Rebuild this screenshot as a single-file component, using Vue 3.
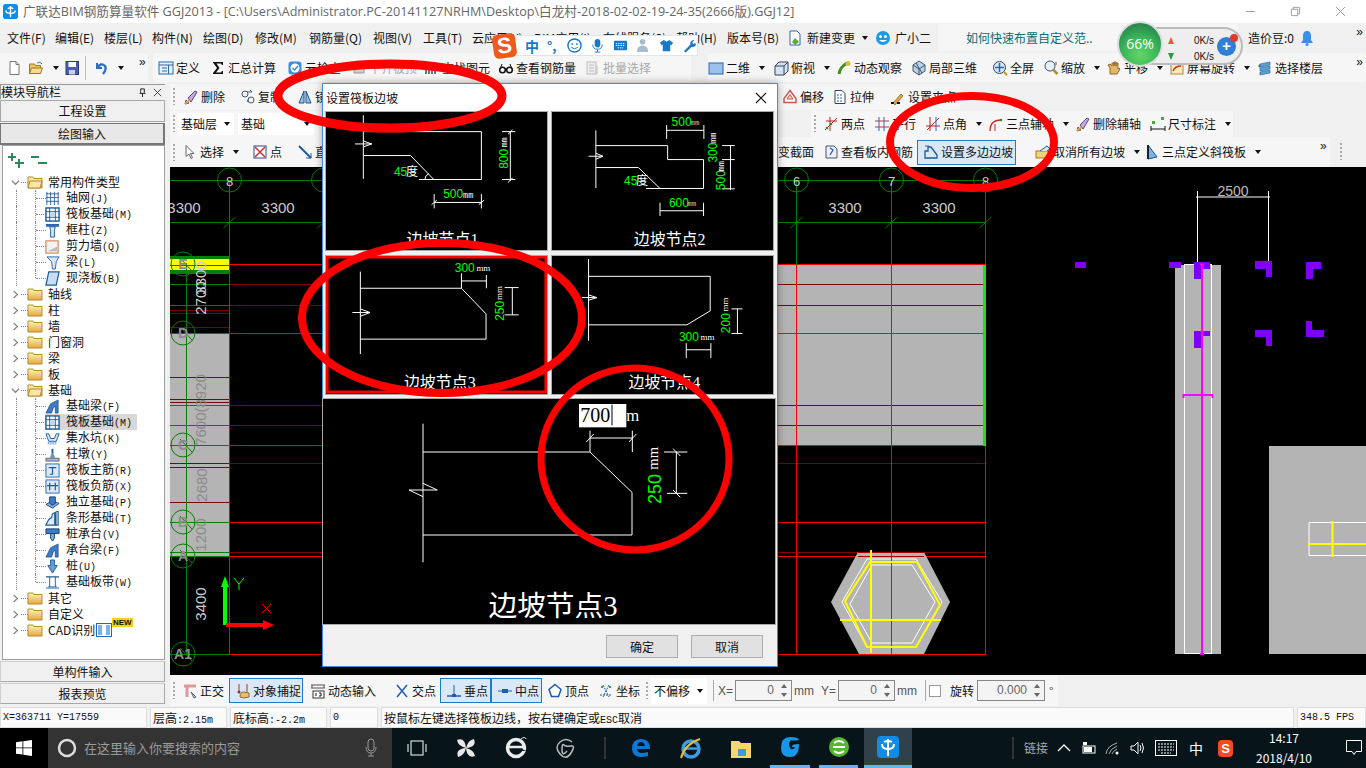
<script setup>
const ic = {
  doc: '<path d="M4 1.5h6l3 3v10H4z" fill="#fff" stroke="#777"/><path d="M10 1.5v3h3" fill="#ddd" stroke="#777"/>',
  open: '<path d="M1.5 4h5l1 1.5h5v8h-11z" fill="#e9c46a" stroke="#a07818"/><path d="M3.5 8h11l-2 5.5h-11z" fill="#f7dc8f" stroke="#a07818"/><path d="M9 3q3-2 5 1" fill="none" stroke="#2a6fc9"/>',
  save: '<rect x="2" y="1.5" width="12.5" height="13" fill="#4a5fb0" stroke="#2c3a80"/><rect x="4.5" y="2" width="7.5" height="5" fill="#fff"/><rect x="5" y="10" width="6" height="4.5" fill="#c9cfe6"/>',
  undo: '<path d="M4 3v5h5" fill="none" stroke="#2b6fc2" stroke-width="2"/><path d="M4 8q4-6 8-2q2 3-2 8" fill="none" stroke="#2b6fc2" stroke-width="2.4"/>',
  define: '<rect x="1" y="2" width="14" height="12" fill="#e6effa" stroke="#2d6ba8"/><path d="M1 5h14M4 8h5M4 11h5M10.500 5v9" stroke="#2d6ba8"/>',
  sigma: '<path d="M3 2h10v3h-1l-1-1.500H6.500L9.500 8l-3.500 4.500H11l1-1.500h1v3H3v-1l4-5-4-5.500z" fill="#111"/>',
  check: '<rect x="1.500" y="1.500" width="13" height="13" rx="3" fill="#3a8fd9"/><circle cx="8" cy="8" r="4.500" fill="#fff"/><path d="M5.500 8l2 2 3.500-4" fill="none" stroke="#3a8fd9" stroke-width="1.500"/>',
  plate: '<path d="M3 13V6h4V3h6v10z" fill="#ccc" stroke="#999"/>',
  find: '<path d="M2 14V3h3v11M8 14V3h3v11M2 7h9" fill="none" stroke="#345" stroke-width="1.500"/>',
  glasses: '<circle cx="4.500" cy="10" r="2.800" fill="none" stroke="#111" stroke-width="1.500"/><circle cx="11.500" cy="10" r="2.800" fill="none" stroke="#111" stroke-width="1.500"/><path d="M7 9h2M2 9l2-5M14 9l-2-5" stroke="#111"/>',
  batch: '<rect x="2" y="2" width="9" height="12" fill="#eee" stroke="#bbb"/><path d="M4 5h5M4 8h5M4 11h5M12 6v8" stroke="#bbb"/>',
  sq2d: '<rect x="1" y="3" width="14" height="11" fill="#9cc0ea" stroke="#2a64b0"/>',
  cube: '<path d="M2 6l4-4h9v9l-4 4H2z" fill="#d4e3f5" stroke="#345"/><path d="M2 6h9v9M11 6l4-4" fill="none" stroke="#345"/>',
  orbit: '<path d="M3 14q1-7 8-11" fill="none" stroke="#4a8a1f" stroke-width="3"/><circle cx="12" cy="3.500" r="2.500" fill="#d5c22c"/>',
  local3d: '<path d="M8 1l6 4v6l-6 4-6-4V5z" fill="#b9d2ee" stroke="#456"/><path d="M2 5l6 4 6-4M8 9v6M5 3l6 10" fill="none" stroke="#456"/>',
  full: '<circle cx="7.500" cy="7.500" r="6" fill="#d9e6f5" stroke="#345"/><path d="M7.500 3v9M3 7.500h9" stroke="#2a64b0" stroke-width="1.500"/><path d="M12 12l3 3" stroke="#c90" stroke-width="2"/>',
  zoom: '<circle cx="7" cy="6" r="5" fill="#e8f0f8" stroke="#456"/><path d="M10.500 10l4 4" stroke="#b98b1e" stroke-width="2.500"/><path d="M13 2v3" stroke="#555"/>',
  pan: '<path d="M4 14V8l-2-3 2-1 2 2V3h2v3V2h2v4V3h2v6l1-1 1 1-3 5z" fill="#e2b66b" stroke="#8a6a2a"/>',
  rotate: '<rect x="2" y="3" width="12" height="11" fill="#fbe9b6" stroke="#b08a2a"/><path d="M4 11q2-5 8-5" fill="none" stroke="#c33" stroke-width="1.500"/><path d="M2 3h12" stroke="#2a64b0" stroke-width="2"/>',
  floors: '<path d="M3 4l10-2v3L3 7zM3 8l10-2v3L3 11zM3 12l10-2v3l-10 2z" fill="#5ea0d8" stroke="#1d5c96" stroke-width=".6"/><path d="M1 6l2-2v4z" fill="#2a8a2a"/>',
  brush: '<path d="M3 11l3 3-4 1zM5 9l3 4 6-10-2-1z" fill="#c8a8e0" stroke="#5a4a80"/><path d="M2 14q3 0 4-3" stroke="#d8a22c" fill="none" stroke-width="2"/>',
  copy: '<circle cx="5" cy="5" r="3" fill="none" stroke="#456"/><circle cx="11" cy="11" r="3" fill="none" stroke="#456"/><path d="M7 3h5l-2-2M7 13L9 9" stroke="#2a64b0" fill="none"/>',
  mirror: '<path d="M7 2v12H2zM9 2v12h5z" fill="#9cc0ea" stroke="#1d4f8a"/>',
  offset: '<path d="M8 1.500l6 8v4H2v-4z" fill="#fff" stroke="#c55" stroke-width="1.500"/><path d="M8 5.500l3 4.500H5z" fill="#f6cccc" stroke="#c55"/>',
  stretch: '<path d="M3 1.500h7l3 3v10H3z" fill="#fff" stroke="#345"/><path d="M5 6h5M5 9h5M5 12h5" stroke="#2a64b0" stroke-dasharray="2 1"/>',
  grip: '<path d="M3 14l8-9 2 2-8 9z" fill="#d8a54a" stroke="#704d10" stroke-width=".6"/><rect x="1" y="13" width="3" height="2" fill="#111"/><rect x="7" y="13" width="3" height="2" fill="#111"/>',
  twop: '<path d="M2 14L14 2M3 5h11M7 1v14" stroke="#b22" fill="none"/><circle cx="8" cy="8" r="1.300" fill="#2a8a2a"/><circle cx="4" cy="12" r="1.300" fill="#2a8a2a"/>',
  para: '<path d="M1 5h14M1 11h14" stroke="#c33"/><path d="M5 1v14M10 1v14" stroke="#36c"/>',
  angle: '<path d="M2 14L14 2M5 1v14M1 10h14" stroke="#b22" fill="none"/><path d="M11 1v14" stroke="#36c"/>',
  arc3: '<path d="M2 15q0-11 11-11" fill="none" stroke="#c22" stroke-width="1.300"/><circle cx="13" cy="4" r="1.300" fill="#2a8a2a"/><path d="M7 8v7" stroke="#c22"/>',
  dim: '<path d="M1 13h14M1 10v5M15 10v5" stroke="#111"/><rect x="2" y="5" width="3" height="3" fill="#4a4"/><rect x="11" y="1" width="3" height="3" fill="#4a4"/>',
  cursor: '<path d="M4 1.500v11l3-2.500 2 4.500 1.500-.7-2-4.300H12z" fill="#fff" stroke="#667"/>',
  point: '<rect x="2" y="2" width="12" height="12" fill="#fff" stroke="#2a4a8a"/><path d="M3 3l10 10M13 3L3 13" stroke="#c33" stroke-width="1.500"/>',
  line: '<path d="M2 2l12 12" stroke="#1d5c96" stroke-width="2"/><path d="M14 9v5H9" fill="none" stroke="#1d5c96"/>',
  section: '<path d="M4 2h8v12H4z" fill="#fff" stroke="#456"/><path d="M5 5h6M5 9h6" stroke="#2a64b0"/>',
  rebar: '<path d="M3 2h8l3 3v9H3z" fill="#eef" stroke="#456"/><path d="M7 4l3 2-3 5" fill="none" stroke="#2a64b0" stroke-width="1.300"/>',
  slope: '<path d="M2 14h12v-3L8 3H5v4H2z" fill="none" stroke="#1d5c96" stroke-width="1.300"/><path d="M2 2l4 0" stroke="#1d5c96"/><path d="M8 3l6 8" stroke="#1d5c96" stroke-dasharray="2 1"/>',
  cancel: '<rect x="1" y="7" width="14" height="7" fill="#f4d27a" stroke="#a07818"/><path d="M5 7l7-5 3 3-3 2" fill="#dbe6f5" stroke="#1d5c96"/>',
  tri: '<path d="M4 1v14l9-2z" fill="#7fb0e6" stroke="#1d4f8a"/><path d="M4 1v14" stroke="#123" stroke-width="2"/>',
  ortho: '<path d="M2 3h12M5 3v11" stroke="#d99" stroke-width="3"/><path d="M9 9l5 5-2 1z" fill="#bcd" stroke="#567"/>',
  snap: '<path d="M4 1v8M12 1v8" stroke="#a33"/><circle cx="4" cy="9" r="1.500" fill="#833"/><path d="M5 14q0-5 4-5l5 1v4l-5 1z" fill="#e4c06e" stroke="#8a6a2a"/>',
  dyn: '<path d="M1 2h14M1 5h14M2 2v3M14 2v3" stroke="#555"/><rect x="3" y="8" width="11" height="7" fill="#fff" stroke="#333"/><path d="M6 10v3M9 10h2v3h-2" stroke="#111" fill="none"/>',
  cross: '<path d="M3 2l10 12M13 2L3 14" stroke="#1d5cb0" stroke-width="1.500"/>',
  perp: '<path d="M1 13h14" stroke="#1d5cb0" stroke-width="1.500"/><path d="M8 2v12" stroke="#1d5cb0"/><rect x="6" y="11" width="4" height="3" fill="#1d5cb0"/>',
  mid: '<path d="M1 8h14" stroke="#1d5cb0"/><rect x="5" y="6" width="6" height="4" fill="#1d5cb0"/>',
  vert: '<path d="M8 1.500l6 5-2.500 7h-7l-2.500-7z" fill="#fff" stroke="#1d5cb0" stroke-width="1.500"/>',
  coord: '<path d="M2 12h12M5 2l6 12M11 2L5 14" stroke="#1d5cb0" stroke-dasharray="2 1"/><rect x="3" y="3" width="2" height="2" fill="#3a3"/><rect x="11" y="3" width="2" height="2" fill="#3a3"/>'
};
const tree = {
  grid: '<path d="M2 1v14M6 1v14M10 1v14M14 1v14M1 3h14M1 7h14M1 11h14" stroke="#2a66b5" fill="none"/>',
  raft: '<rect x="1" y="1" width="14" height="14" fill="#fff" stroke="#1d5c96" stroke-width="1.500"/><path d="M5 1v14M11 1v14M1 5h14M1 11h14" stroke="#1d5c96"/><rect x="6" y="6" width="4" height="4" fill="#bcd7f2"/>',
  col: '<path d="M1 1h14v3H1z" fill="#2a66b5"/><path d="M5 4h6l-1 4v7H6V8z" fill="#d7e6f7" stroke="#1d5c96"/>',
  wall: '<rect x="1" y="2" width="13" height="13" fill="#f3f3f3" stroke="#d06a2a"/><path d="M3 13l10-5v5z" fill="#bbb"/>',
  beam: '<path d="M2 2h13l-3 5-1 8H8L7 7z" fill="#d7e6f7" stroke="#2a66b5"/>',
  slab: '<path d="M4 1h11l-3 14H1z" fill="#c8def6" stroke="#1d5c96" stroke-width="1.300"/>',
  fbeam: '<path d="M1 15L6 5l8-4v14h-3V8l-2 1-2 6z" fill="#3f7cc7" stroke="#123f73" stroke-width=".7"/>',
  pit: '<path d="M1 3h3l2 5h4l2-5h3l-3 8H4z" fill="#d7e6f7" stroke="#1d5c96"/><path d="M3 13h10" stroke="#5a98dc" stroke-dasharray="1 1" stroke-width="3"/>',
  ped: '<rect x="1" y="12" width="14" height="3" fill="#a9b8ca" stroke="#667"/><path d="M5 12l2-5h2l2 5z" fill="#6e93c2"/><path d="M7 2h2v5H7z" fill="#1d5c96"/>',
  rmain: '<rect x="1" y="1" width="14" height="14" fill="#dbe9f8" stroke="#2a66b5"/><path d="M4 5h8M8 5v7H5" stroke="#1d5c96" fill="none" stroke-width="1.300"/>',
  rneg: '<rect x="1" y="1" width="14" height="14" fill="#dbe9f8" stroke="#2a66b5"/><path d="M2 7h12M5 4v8M11 4v8" stroke="#1d5c96" stroke-width="1.300"/>',
  iso: '<path d="M1 10l7-4 7 3-7 5z" fill="#8ab0dc" stroke="#1d4f8a"/><path d="M5 9V2h6v7l-3 2z" fill="#3f7cc7" stroke="#123f73"/>',
  strip: '<path d="M1 15l3-6 3-2 1-4 6-3v15z" fill="#dfeafa" stroke="#1d5c96" stroke-width="1.200"/><path d="M11 2v13" stroke="#1d5c96" stroke-width="2.500"/>',
  cap: '<path d="M1 2h14v5H1z" fill="#3f7cc7" stroke="#123f73"/><path d="M6 7h4v5l-2 3-2-3z" fill="#8ab0dc" stroke="#123f73"/>',
  pile: '<path d="M6 1h4v6h3l-5 8-5-8h3z" fill="#6e9cd4" stroke="#1d5c96"/>',
  band: '<path d="M1 2h14M3 13h10" stroke="#1d5c96" stroke-width="1.500"/><path d="M5 2v11M11 2v11" stroke="#1d5c96"/><rect x="1" y="13" width="14" height="2" fill="#8ab0dc"/>'
};
const rows = [
  { t: '常用构件类型', open: 1 },
  { t: '轴网', k: '(J)', i: 'grid', c: 1 }, { t: '筏板基础', k: '(M)', i: 'raft', c: 1 }, { t: '框柱', k: '(Z)', i: 'col', c: 1 },
  { t: '剪力墙', k: '(Q)', i: 'wall', c: 1 }, { t: '梁', k: '(L)', i: 'beam', c: 1 }, { t: '现浇板', k: '(B)', i: 'slab', c: 1, last: 1 },
  { t: '轴线' }, { t: '柱' }, { t: '墙' }, { t: '门窗洞' }, { t: '梁' }, { t: '板' },
  { t: '基础', open: 1 },
  { t: '基础梁', k: '(F)', i: 'fbeam', c: 1 }, { t: '筏板基础', k: '(M)', i: 'raft', c: 1, sel: 1 }, { t: '集水坑', k: '(K)', i: 'pit', c: 1 },
  { t: '柱墩', k: '(Y)', i: 'ped', c: 1 }, { t: '筏板主筋', k: '(R)', i: 'rmain', c: 1 }, { t: '筏板负筋', k: '(X)', i: 'rneg', c: 1 },
  { t: '独立基础', k: '(P)', i: 'iso', c: 1 }, { t: '条形基础', k: '(T)', i: 'strip', c: 1 }, { t: '桩承台', k: '(V)', i: 'cap', c: 1 },
  { t: '承台梁', k: '(F)', i: 'fbeam', c: 1 }, { t: '桩', k: '(U)', i: 'pile', c: 1 }, { t: '基础板带', k: '(W)', i: 'band', c: 1, last: 1 },
  { t: '其它' }, { t: '自定义' }, { t: 'CAD识别', cad: 1 }
];
const seq = (items, end) => items.map((it, i) => {
  const o = it.o ?? 18, left = it.x - o;
  const next = items[i + 1];
  const nl = next ? next.x - (next.o ?? 18) : end;
  const w = it.w || nl - left;
  return { ...it, o, style: { width: w + 'px', marginRight: nl - left - w + 'px', paddingLeft: o - 18 + 'px' } };
});
const main1 = seq([
  { x: 24, i: 'doc' }, { x: 46, i: 'open', d: 1 }, { x: 82, i: 'save' }, { x: 88, sep: 1, o: 3 }, { x: 111, i: 'undo', d: 1 }
], 148);
const main2 = seq([
  { x: 176, i: 'define', t: '定义' }, { x: 228, i: 'sigma', t: '汇总计算' }, { x: 305, i: 'check', t: '云检查' },
  { x: 369, i: 'plate', t: '平齐板顶', dim: 1 }, { x: 442, i: 'find', t: '查找图元' }, { x: 516, i: 'glasses', t: '查看钢筋量' }, { x: 603, i: 'batch', t: '批量选择', dim: 1 }
], 690);
const main3 = seq([
  { x: 726, i: 'sq2d', t: '二维', d: 1 }, { x: 791, i: 'cube', t: '俯视', d: 1 }, { x: 854, i: 'orbit', t: '动态观察' }, { x: 929, i: 'local3d', t: '局部三维' },
  { x: 1010, i: 'full', t: '全屏' }, { x: 1061, i: 'zoom', t: '缩放', d: 1 }, { x: 1124, i: 'pan', t: '平移', d: 1 }, { x: 1187, i: 'rotate', t: '屏幕旋转', d: 1 }, { x: 1275, i: 'floors', t: '选择楼层' }
], 1350);
const r2a = seq([
  { x: 201, i: 'brush', t: '删除' }, { x: 258, i: 'copy', t: '复制' }, { x: 315, i: 'mirror', t: '镜向' }, { x: 375, i: 'offset', t: '延伸' }
], 782);
const r2b = seq([
  { x: 800, i: 'offset', t: '偏移' }, { x: 850, i: 'stretch', t: '拉伸' }, { x: 908, i: 'grip', t: '设置夹点' }
], 960);
const r3 = seq([
  { x: 841, i: 'twop', t: '两点' }, { x: 892, i: 'para', t: '平行' }, { x: 943, i: 'angle', t: '点角', d: 1 }, { x: 1006, i: 'arc3', t: '三点辅轴', d: 1 },
  { x: 1093, i: 'brush', t: '删除辅轴' }, { x: 1168, i: 'dim', t: '尺寸标注', d: 1 }
], 1233);
const r4a = seq([
  { x: 200, i: 'cursor', t: '选择', d: 1 }, { x: 270, i: 'point', t: '点' }, { x: 315, i: 'line', t: '直线' }
], 778);
const r4b = seq([
  { x: 778, t: '变截面', o: 0, noicon: 1 }, { x: 841, i: 'rebar', t: '查看板内钢筋' }, { x: 940, i: 'slope', t: '设置多边边坡', o: 23, w: 99, active: 1 },
  { x: 1053, i: 'cancel', t: '取消所有边坡', d: 1 }, { x: 1162, i: 'tri', t: '三点定义斜筏板', d: 1 }
], 1315);
const bt = seq([
  { x: 200, i: 'ortho', t: '正交' }, { x: 252, i: 'snap', t: '对象捕捉', o: 23, w: 74, active: 1 }, { x: 328, i: 'dyn', t: '动态输入' },
  { x: 412, i: 'cross', t: '交点' }, { x: 463, i: 'perp', t: '垂点', o: 23, w: 51, active: 1 }, { x: 514, i: 'mid', t: '中点', o: 23, w: 51, active: 1 },
  { x: 565, i: 'vert', t: '顶点' }, { x: 616, i: 'coord', t: '坐标' }
], 646);
const menus = [['文件(F)', 7], ['编辑(E)', 55], ['楼层(L)', 104], ['构件(N)', 152], ['绘图(D)', 203], ['修改(M)', 255], ['钢筋量(Q)', 309], ['视图(V)', 373], ['工具(T)', 423], ['云应用(Y)', 472], ['BIM应用(I)', 534], ['在线服务(S)', 603], ['帮助(H)', 676], ['版本号(B)', 727]]
  .map((m, i, a) => ({ t: m[0], w: (a[i + 1] ? a[i + 1][1] : 787) - m[1] }));
const redR = [264.5, 333.5, 445.5, 522.5, 556.5, 654.5];
const darkR = [284.5, 305.5, 405.5, 425.5, 463.5, 552.5];
const darkL = [310.5, 313.5, 327.5, 377.5, 399.5, 402.5, 463.5, 467.5, 502.5];
const greenL = [284.5, 305.5, 333.5, 405.5, 425.5, 445.5, 522.5, 552.5, 556.5, 654.5];
const topAxes = [[229.5, '8'], [323.5, ''], [796.5, '6'], [891.5, '7'], [985.5, '8']];
const leftAxes = [[264, 'E'], [333, 'D'], [445, 'C'], [522, 'B'], [556, 'A'], [654, 'A1']];
const purple = 'M1075 262h11v6h-11zM1169 262h12v6h-12zM1194 262h16v7h-9v10h-7zM1255 261h17v16h-6v-8h-11zM1306 262h15v7h-8v10h-7zM1194 331h16v5h-9v12h-7zM1255 330h17v16h-6v-9h-11zM1306 321h6v9h12v7h-18z';
</script>

<template>
  <div class="app">
    <svg class="defs" width="0" height="0">
      <defs>
        <linearGradient id="fold" x1="0" y1="0" x2="0" y2="1"><stop offset="0" stop-color="#fff3c4"/><stop offset="1" stop-color="#e2a93a"/></linearGradient>
      </defs>
    </svg>

    <header class="titlebar">
      <svg class="logo" viewBox="0 0 16 16"><rect width="16" height="16" rx="3" fill="#0f8de6"/><path d="M8 2v12M3 7q0 3 5 3t5-3M5 5q3-2 6 0" fill="none" stroke="#fff" stroke-width="1.500"/></svg>
      <span class="title-text">广联达BIM钢筋算量软件 GGJ2013 - [C:\Users\Administrator.PC-20141127NRHM\Desktop\白龙村-2018-02-02-19-24-35(2666版).GGJ12]</span>
      <div class="winbtns">
        <svg viewBox="0 0 12 12"><path d="M1 6h10" stroke="#999"/></svg>
        <svg viewBox="0 0 12 12"><path d="M1.500 3.500h7v7h-7zM3.500 3.500v-2h7v7h-2" fill="none" stroke="#999"/></svg>
        <svg viewBox="0 0 12 12"><path d="M1 1l10 10M11 1L1 11" stroke="#999"/></svg>
      </div>
    </header>

    <nav class="menubar">
      <span v-for="m in menus" :key="m.t" class="menu" :style="{ width: m.w + 'px' }">{{ m.t }}</span>
      <svg class="ic16 mi" viewBox="0 0 16 16"><path d="M3 1h7l3 3v11H3z" fill="#fff" stroke="#2a66b5"/><path d="M8 8l4 4-4 3-3-3z" fill="#5cac2c"/></svg>
      <span class="menu nv">新建变更</span><i class="drop mdrop"></i>
      <svg class="ic16 mi2" viewBox="0 0 16 16"><circle cx="8" cy="8" r="7" fill="#1e9be8"/><circle cx="5.500" cy="6.500" r="1.500" fill="#fff"/><circle cx="10.500" cy="6.500" r="1.500" fill="#fff"/><path d="M4 10q4 4 8 0" fill="#fff"/></svg>
      <span class="menu">广小二</span>
      <span class="news">如何快速布置自定义范..</span>
      <span class="beans">造价豆:0</span>
      <svg class="ic16 bell" viewBox="0 0 16 16"><path d="M8 1q4 0 4 5v4l2 3H2l2-3V6q0-5 4-5z" fill="#3a8fe8"/><circle cx="8" cy="14.500" r="1.500" fill="#3a8fe8"/></svg>
      <span class="more">»</span>
    </nav>

    <div class="toolrow">
      <div class="tb tb1">
        <template v-for="(t, n) in main1" :key="n">
          <div class="tool" :style="t.style">
            <b v-if="t.sep" class="sep"></b>
            <svg v-else class="ic16" viewBox="0 0 16 16" v-html="ic[t.i]"></svg>
            <i v-if="t.d" class="drop"></i>
          </div>
        </template>
      </div>
      <span class="more in1">»</span>
      <div class="tb tb2">
        <div v-for="t in main2" :key="t.t" class="tool" :class="{ dim: t.dim }" :style="t.style">
          <svg class="ic16" viewBox="0 0 16 16" v-html="ic[t.i]"></svg><span>{{ t.t }}</span>
        </div>
      </div>
      <div class="tb tb3">
        <div v-for="t in main3" :key="t.t" class="tool" :style="t.style">
          <svg class="ic16" viewBox="0 0 16 16" v-html="ic[t.i]"></svg><span>{{ t.t }}</span><i v-if="t.d" class="drop"></i>
        </div>
        <span class="more in3">»</span>
      </div>
    </div>

    <div class="workspace">
      <aside class="nav">
        <div class="nav-head">
          <span>模块导航栏</span>
          <svg viewBox="0 0 10 10"><path d="M3 1h4v4l1 1H2l1-1zM5 6v4" fill="none" stroke="#111"/></svg>
          <svg viewBox="0 0 10 10"><path d="M1 1l8 8M9 1L1 9" stroke="#333"/></svg>
        </div>
        <button class="navbtn">工程设置</button>
        <button class="navbtn cur">绘图输入</button>
        <div class="treebox">
          <div class="plusminus">
            <svg viewBox="0 0 18 16"><path d="M1 5h8M5 1v8M8 11h9M12 7v9" stroke="#2a8a5a" stroke-width="2"/></svg>
            <svg viewBox="0 0 18 16"><path d="M1 5h8M8 11h9" stroke="#2a8a5a" stroke-width="2"/></svg>
          </div>
          <div class="tree">
            <div v-for="(r, n) in rows" :key="n" class="row" :class="{ child: r.c, last: r.last }">
              <template v-if="r.c">
                <u class="hd"></u>
                <span class="lbl" :class="{ sel: r.sel }"><svg class="ic14" viewBox="0 0 16 16" v-html="tree[r.i]"></svg><span>{{ r.t }}<em>{{ r.k }}</em></span></span>
              </template>
              <template v-else>
                <svg class="chev" viewBox="0 0 10 10"><path :d="r.open ? 'M1 3l4 4 4-4' : 'M3 1l4 4-4 4'" fill="none" stroke="#888" stroke-width="1.500"/></svg>
                <u class="hd0"></u>
                <svg class="ic14 fold" viewBox="0 0 16 14">
                  <path d="M1 2h5l1 1.500h8V13H1z" fill="url(#fold)" stroke="#b98a2a"/>
                  <path v-if="r.open" d="M3 6h12l-2 7H1z" fill="#fbe6a8" stroke="#b98a2a"/>
                </svg>
                <span class="lbl0">{{ r.t }}</span>
                <template v-if="r.cad">
                  <svg class="cadic" viewBox="0 0 16 14"><rect x=".5" y=".5" width="15" height="13" fill="#fff" stroke="#2a66b5"/><path d="M2 2h4v10H2zM10 2h4v10h-4z" fill="#7fb2ea"/></svg>
                  <span class="newtag">NEW</span>
                </template>
              </template>
            </div>
          </div>
        </div>
        <button class="navbtn low">单构件输入</button>
        <button class="navbtn low">报表预览</button>
      </aside>

      <main class="editor">
        <div class="erow e2">
          <div class="tb2a">
            <b class="gripper"></b>
            <div v-for="t in r2a" :key="t.t" class="tool" :style="t.style"><svg class="ic16" viewBox="0 0 16 16" v-html="ic[t.i]"></svg><span>{{ t.t }}</span></div>
            <div v-for="t in r2b" :key="t.t" class="tool" :style="t.style"><svg class="ic16" viewBox="0 0 16 16" v-html="ic[t.i]"></svg><span>{{ t.t }}</span></div>
          </div>
        </div>
        <div class="erow e3">
          <div class="selects">
            <b class="gripper"></b>
            <span class="sel1">基础层<i class="drop"></i></span>
            <span class="sel2">基础<i class="drop"></i></span>
          </div>
          <div class="tb3a">
            <b class="gripper"></b>
            <div v-for="t in r3" :key="t.t" class="tool" :style="t.style"><svg class="ic16" viewBox="0 0 16 16" v-html="ic[t.i]"></svg><span>{{ t.t }}</span><i v-if="t.d" class="drop"></i></div>
          </div>
        </div>
        <div class="erow e4">
          <b class="gripper"></b>
          <div v-for="t in r4a" :key="t.t" class="tool" :style="t.style"><svg class="ic16" viewBox="0 0 16 16" v-html="ic[t.i]"></svg><span>{{ t.t }}</span><i v-if="t.d" class="drop"></i></div>
          <div v-for="t in r4b" :key="t.t" class="tool" :class="{ active: t.active }" :style="t.style"><svg v-if="!t.noicon" class="ic16" viewBox="0 0 16 16" v-html="ic[t.i]"></svg><span>{{ t.t }}</span><i v-if="t.d" class="drop"></i></div>
          <span class="more in4">»</span>
          <b class="gripper g4"></b>
        </div>

        <svg class="cad" viewBox="170 167 1196 508" width="1196" height="508">
          <rect x="170" y="167" width="1196" height="508" fill="#000"/>
          <!-- slab fills -->
          <rect x="170" y="333" width="59" height="223" fill="#b4b4b4"/>
          <rect x="760" y="265" width="223" height="180" fill="#b4b4b4"/>
          <!-- yellow beam -->
          <rect x="170" y="256" width="59" height="18" fill="#008000"/>
          <rect x="170" y="259" width="59" height="11" fill="#ff0"/>
          <path d="M170 265.500H229" stroke="#008000"/>
          <!-- grid lines -->
          <g stroke="#800000" shape-rendering="crispEdges">
            <path v-for="y in darkL" :key="y" :d="`M170 ${y}H229`"/>
            <path v-for="y in darkR" :key="'r' + y" :d="`M229 ${y}H986`"/>
          </g>
          <g stroke="#f00" shape-rendering="crispEdges" fill="none">
            <path v-for="y in redR" :key="y" :d="`M229 ${y}H986`"/>
            <path d="M229.500 264V655M323.500 264V655M796.500 265V655M891.500 265V655M985.500 445V655"/>
          </g>
          <g stroke="#008000" fill="none" shape-rendering="crispEdges">
            <path d="M170 180.500H986M170 222.500H986M229.500 180V264M323.500 180V264M796.500 180V265M891.500 180V265M985.500 180V265M186.500 263V655"/>
            <path v-for="y in greenL" :key="y" :d="`M170 ${y}H229`"/>
          </g>
          <g stroke="#008000" fill="none">
            <circle v-for="a in topAxes" :key="a[0]" :cx="a[0]" cy="180" r="12"/>
            <path v-for="a in topAxes" :key="'t' + a[0]" :d="`M${a[0] - 6} 228L${a[0] + 6} 217`"/>
            <circle v-for="a in leftAxes" :key="a[1]" cx="183" :cy="a[0]" r="12"/>
            <path v-for="a in leftAxes" :key="'l' + a[1]" :d="`M180 ${a[0] - 6}L192 ${a[0] + 7}`"/>
          </g>
          <rect x="983" y="265" width="3" height="181" fill="#1fe01f"/>
          <g class="cadt axis">
            <text v-for="a in topAxes" :key="a[0]" :x="a[0]" y="186">{{ a[1] }}</text>
            <text v-for="a in leftAxes" :key="a[1]" x="183" :y="a[0] + 5" class="ax2">{{ a[1] }}</text>
          </g>
          <g class="cadt">
            <text x="184" y="213">3300</text><text x="278" y="213">3300</text>
            <text x="845" y="213">3300</text><text x="939" y="213">3300</text>
            <text x="1233" y="196" class="dimt">2500</text>
            <text transform="translate(206 298) rotate(-90)">2700</text>
            <text transform="translate(206 278) rotate(-90)">3300</text>
            <text class="ong" transform="translate(206 410) rotate(-90)">7600(8920</text>
            <text class="ong" transform="translate(207 485) rotate(-90)">2680</text>
            <text class="ong" transform="translate(206 535) rotate(-90)">1200</text>
            <text transform="translate(206 604) rotate(-90)">3400</text>
          </g>
          <!-- origin axes -->
          <path d="M223 625V587h-2l4-11 4 11h-2v38z" fill="#0f0"/>
          <path d="M226 623h37v-3l11 5-11 5v-3h-37z" fill="#f00"/>
          <path d="M234 578l5 6 5-6M239 584v6" stroke="#0f0" fill="none"/>
          <path d="M262 604l9 9M271 604l-9 9" stroke="#f00" fill="none"/>
          <!-- right drawings -->
          <path d="M1197.500 264V191M1268.500 264V191M1196 197h74" stroke="#fff" fill="none"/>
          <rect x="1175" y="265" width="46" height="389" fill="#b4b4b4"/>
          <rect x="1184.500" y="264.500" width="27" height="389" fill="none" stroke="#fff"/>
          <path :d="purple" fill="#7f00ff"/>
          <path d="M1202 265V654M1200 264.500h4M1200 654h4M1183.500 398v-3h29v3" stroke="#f0f" stroke-width="2" fill="none"/>
          <rect x="1269" y="446" width="97" height="208" fill="#b4b4b4"/>
          <path d="M1366 522.500h-57v33h57" stroke="#fff" fill="none"/>
          <path d="M1332.500 521v36M1308 544h58" stroke="#ff0" stroke-width="2" fill="none"/>
          <!-- hexagon -->
          <path d="M858 552h66l26 50-26 52h-65l-28-52z" fill="#b4b4b4"/>
          <path d="M867 559h49l26 43-26 45h-49l-25-45zM872 565h40l23 37-23 41h-40l-22-39z" fill="none" stroke="#fff"/>
          <path d="M891.500 552V655" stroke="#f00" shape-rendering="crispEdges"/>
          <path d="M858 552.500h66M858 556.500h66" stroke="#a00" shape-rendering="crispEdges"/>
          <path d="M870 562h47l23 43-24 42h-49l-22-46zM871 550V653M840 620h101" fill="none" stroke="#ff0" stroke-width="2"/>
        </svg>

        <div class="erow bottombar">
          <b class="gripper"></b>
          <div v-for="t in bt" :key="t.t" class="tool" :class="{ active: t.active }" :style="t.style"><svg class="ic16" viewBox="0 0 16 16" v-html="ic[t.i]"></svg><span>{{ t.t }}</span></div>
          <b class="gripper g5"></b>
          <span class="selnp">不偏移<i class="drop"></i></span>
          <span class="sepv"></span>
          <span class="lab">X=</span><span class="spin s56">0<i class="sp"></i></span><span class="lab">mm</span>
          <span class="lab y">Y=</span><span class="spin s56">0<i class="sp"></i></span><span class="lab">mm</span>
          <span class="sepv"></span>
          <span class="chk"></span>
          <span class="rot">旋转</span>
          <span class="spin s68">0.000<i class="sp"></i></span>
          <span class="deg">°</span>
        </div>
      </main>
    </div>

    <footer class="status">
      <span class="cell c1 m">X=363711 Y=17559</span>
      <span class="cell c2">层高<span class="m">:2.15m</span></span>
      <span class="cell c3">底标高<span class="m">:-2.2m</span></span>
      <span class="cell c4 m">0</span>
      <span class="cell c5">按鼠标左键选择筏板边线，按右键确定或<span class="m">ESC</span>取消</span>
      <span class="cell c6 m">348.5 FPS</span>
    </footer>

    <footer class="taskbar">
      <div class="start"><svg viewBox="0 0 16 16" width="16" height="16"><path d="M0 2.200l6.500-.9v6.200H0zM7.300 1.200L16 0v7.500H7.300zM0 8.300h6.500v6.300L0 13.700zM7.300 8.300H16V16l-8.700-1.200z" fill="#fff"/></svg></div>
      <div class="search">
        <svg viewBox="0 0 20 20" width="20" height="20"><circle cx="10" cy="10" r="8" fill="none" stroke="#ddd" stroke-width="2.500"/></svg>
        <span>在这里输入你要搜索的内容</span>
        <svg class="mic" viewBox="0 0 12 20" width="12" height="20"><rect x="3" y="1" width="6" height="12" rx="3" fill="none" stroke="#999"/><path d="M1 9q0 6 5 6t5-6M6 15v3M3 18h6" fill="none" stroke="#999"/></svg>
      </div>
      <div class="tasks">
        <svg viewBox="0 0 20 16" width="20" height="16"><rect x="4" y="1" width="12" height="14" fill="none" stroke="#fff"/><path d="M1 4v8M19 4v8" stroke="#fff"/></svg>
        <svg viewBox="0 0 24 24" width="24" height="24"><path d="M12 12Q4 10 3 4q8-3 9 8zM12 12Q14 4 20 3q3 8-8 9zM12 12q8 2 9 8-8 3-9-8zM12 12q-2 8-8 9-3-8 8-9z" fill="#e8e8e8"/></svg>
        <svg viewBox="0 0 24 24" width="24" height="24"><circle cx="12" cy="12" r="8.500" fill="none" stroke="#ececec" stroke-width="3.500"/><path d="M5 11h14" stroke="#ececec" stroke-width="2.500"/><path d="M18 13l4 2H10z" fill="#0a171d"/><path d="M17 3Q21 0 22 3" stroke="#ececec" fill="none"/></svg>
        <svg viewBox="0 0 24 24" width="24" height="24"><path d="M18 6q-6-5-12 0t0 12 11-1 0-7-7-1-2 5 5 1" fill="none" stroke="#bbb" stroke-width="1.500"/></svg>
        <b class="task-sep"></b>
        <svg viewBox="0 0 24 24" width="24" height="24"><path d="M3 13Q3 3 12 3q9 0 9 10H8q1 6 11 3v4Q4 24 3 13zM8 10h8q-1-4-4-4-3 0-4 4z" fill="#0a78d6"/></svg>
        <svg viewBox="0 0 24 24" width="24" height="24"><circle cx="12" cy="13" r="8" fill="none" stroke="#3a9de0" stroke-width="3.500"/><path d="M5 12.500h14" stroke="#3a9de0" stroke-width="2.500"/><path d="M2 22Q6 8 21 3" fill="none" stroke="#f2b82e" stroke-width="2"/></svg>
        <svg class="folder" viewBox="0 0 24 24" width="24" height="24"><path d="M2 5h8l2 2h10v15H2z" fill="#f6d76e"/><rect x="9" y="13" width="8" height="7" fill="#3a9de0"/></svg>
        <div class="tk w40"><svg viewBox="0 0 24 24" width="24" height="24"><path d="M12 2q8 0 9 3-5 1-8 0-4 4 0 9 3 1 4-2h-3q-1-3 7-3 0 13-9 13Q3 22 3 13 3 2 12 2z" fill="#1597ea"/></svg></div>
        <div class="tk w39"><svg viewBox="0 0 24 24" width="24" height="24"><circle cx="12" cy="12" r="10" fill="#55b82c"/><path d="M6 12h12M7 8q5-4 10 0M7 16q5 4 10 0" stroke="#fff" stroke-width="2" fill="none"/></svg></div>
        <div class="tk task-active"><svg viewBox="0 0 24 24" width="24" height="24"><rect x="1" y="1" width="22" height="22" rx="4" fill="#0f8de6"/><path d="M12 4v17M6 9q0 5 6 5t6-5M8 7q4-2 8 0" fill="none" stroke="#fff" stroke-width="2"/></svg></div>
      </div>
      <div class="tray">
        <b class="task-sep t2"></b>
        <span class="link">链接</span>
        <svg viewBox="0 0 14 8" width="14" height="8"><path d="M1 7l6-6 6 6" fill="none" stroke="#fff" stroke-width="1.300"/></svg>
        <svg viewBox="0 0 16 14" width="16" height="14"><rect x="3" y="5" width="12" height="7" fill="none" stroke="#fff"/><rect x="4" y="6" width="8" height="5" fill="#fff"/><path d="M3 1h4v3H3z" fill="#fff"/></svg>
        <svg viewBox="0 0 16 14" width="16" height="14"><path d="M1 13Q2 5 12 2M4 13Q5 8 12 5M7 13Q8 10 12 8" fill="none" stroke="#aaa"/><circle cx="12" cy="12" r="1.500" fill="#fff"/></svg>
        <svg viewBox="0 0 16 14" width="16" height="14"><path d="M1 5h3l4-4v12l-4-4H1z" fill="none" stroke="#fff"/><path d="M10 4q2 3 0 6M12 2q3 5 0 10" fill="none" stroke="#fff"/></svg>
        <svg viewBox="0 0 22 16" width="22" height="16"><rect x=".5" y=".5" width="21" height="15" fill="none" stroke="#fff"/><path d="M3 4h16M3 7h16M3 10h16M6 13h10" stroke="#fff" stroke-dasharray="2 1"/></svg>
        <span class="zh">中</span>
        <span class="sg">S</span>
        <div class="clock"><span>14:17</span><span>2018/4/10</span></div>
        <svg class="note" viewBox="0 0 16 16" width="16" height="16"><path d="M.5.500h15v11H10l-2 3-2-3H.5z" fill="none" stroke="#fff"/></svg>
      </div>
    </footer>

    <!-- floating sogou bar -->
    <div class="sogou">
      <span class="sg-logo">S</span>
      <div class="sg-bar">
        <span class="sg-zh">中</span><span class="sg-dot">°,</span>
        <svg viewBox="0 0 16 16"><circle cx="8" cy="8" r="7" fill="none" stroke="#1a78c9" stroke-width="1.500"/><circle cx="5.500" cy="6.500" r="1" fill="#1a78c9"/><circle cx="10.500" cy="6.500" r="1" fill="#1a78c9"/><path d="M4.500 10q3.500 3 7 0" fill="none" stroke="#1a78c9"/></svg>
        <svg viewBox="0 0 16 16"><rect x="5" y="1" width="6" height="9" rx="3" fill="#1a78c9"/><path d="M3 7q0 5 5 5t5-5M8 12v3M5 15h6" fill="none" stroke="#1a78c9"/></svg>
        <svg viewBox="0 0 16 16"><rect x="1" y="3" width="14" height="10" rx="1" fill="#1a78c9"/><path d="M3 6h10M3 8h10M5 10.500h6" stroke="#fff" stroke-dasharray="1.500 1"/></svg>
        <svg viewBox="0 0 16 16"><circle cx="7" cy="4" r="3" fill="#a9bccd"/><path d="M1 15q0-7 6-7t6 7z" fill="#a9bccd"/></svg>
        <svg viewBox="0 0 16 16"><path d="M5 2L1 5l2 3 1-1v7h8V7l1 1 2-3-4-3-3 2z" fill="#1a78c9"/></svg>
        <svg viewBox="0 0 16 16"><path d="M2 14l7-7q-1-4 3-5l1 .500-2 2 1 2 2-1 1 1q-1 4-5 3l-6 6z" fill="#1a78c9"/></svg>
      </div>
    </div>

    <!-- floating net-speed ball -->
    <div class="netball">
      <div class="ball">66%</div>
      <div class="speeds">
        <span><i class="up"></i>0K/s</span>
        <span><i class="dn"></i>0K/s</span>
      </div>
      <div class="plus">+<b></b></div>
    </div>

    <!-- modal dialog -->
    <section class="dialog">
      <div class="dlg-title">
        <span>设置筏板边坡</span>
        <svg viewBox="0 0 12 12" width="12" height="12"><path d="M1 1l10 10M11 1L1 11" stroke="#111" stroke-width="1.100"/></svg>
      </div>
      <div class="thumbs">
        <svg class="thumb" viewBox="18 83 664 415" width="221" height="138">
          <g class="wl"><path d="M130 93V284M105 179h50M130 170l25 9-25 9M130 142H485V286H297M130 214H272L342 286M315 286q0-12 12-18"/><path d="M572 140V290M547 142h40M547 286h40M343 355H485M343 330v43M485 330v43M335 362l16-14M477 362l16-14M565 150l14-14M565 295l14-14"/></g>
          <text class="g36" x="222" y="274">45</text><text class="w40" x="258" y="276">度</text>
          <text class="g36" transform="translate(565 254) rotate(-90)">800</text><text class="w24" transform="translate(562 190) rotate(-90)">mm</text>
          <text class="g36" x="370" y="342">500</text><text class="w24" x="430" y="342">mm</text>
          <text class="ttl" x="368" y="484">边坡节点1</text>
        </svg>
        <svg class="thumb" viewBox="695 83 665 415" width="221" height="138">
          <g class="wl"><path d="M827 138V312M805 216h43M827 207l21 9-21 9M827 184H1043V226H1151V313H978M827 250H955L1020 313M1040 138H1152M1040 122v42M1152 122v42M1232 183V318M1207 184h38M1207 226h38M1207 314h38M1020 380H1151M1020 356v40M1151 356v40"/></g>
          <text class="g36" x="912" y="302">45</text><text class="w40" x="948" y="304">度</text>
          <text class="g36" x="1055" y="125">500</text><text class="mm" x="1112" y="122">mm</text>
          <text class="g36" transform="translate(1192 235) rotate(-90)">300</text><text class="w24" transform="translate(1188 176) rotate(-90)">mm</text>
          <text class="g36" transform="translate(1217 318) rotate(-90)">500</text><text class="w24" transform="translate(1214 262) rotate(-90)">mm</text>
          <text class="g36" x="1047" y="369">600</text><text class="mm" x="1102" y="365">mm</text>
          <text class="ttl" x="1049" y="482">边坡节点2</text>
        </svg>
        <svg class="thumb picked" viewBox="18 513 664 415" width="221" height="138">
          <g class="wl"><path d="M121 560V808M97 683h53M121 672l29 11-29 11M121 610H425L499 687V763H121M425 588H500M425 565v45M500 570v40M578 608V690M555 608h42M555 690h42"/></g>
          <text class="g36" x="405" y="560">300</text><text class="w30" x="470" y="558">mm</text>
          <text class="g36" transform="translate(552 708) rotate(-90)">250</text><text class="w30" transform="translate(546 645) rotate(-90)">mm</text>
          <text class="ttl" x="360" y="910">边坡节点3</text>
          <rect x="21" y="516" width="658" height="406" fill="none" stroke="#f00" stroke-width="9"/>
        </svg>
        <svg class="thumb" viewBox="695 513 665 415" width="221" height="138">
          <g class="wl"><path d="M805 522V768M785 638h45M805 630l25 8-25 8M805 574H1171V678L1101 720H805M1253 672V748M1235 672h33M1235 746h33M1099 795H1173M1099 775v45M1173 775v45"/></g>
          <text class="g36" transform="translate(1230 745) rotate(-90)">200</text><text class="w30" transform="translate(1224 680) rotate(-90)">mm</text>
          <text class="g36" x="1077" y="768">300</text><text class="w30" x="1142" y="766">mm</text>
          <text class="ttl" x="1033" y="910">边坡节点4</text>
        </svg>
      </div>
      <svg class="preview" viewBox="10 13 1356 675" width="452" height="225">
        <g class="wl"><path d="M310 87V503M268 286h85M310 266l43 20M268 286l42 20M310 172H811L937 293V421H310M811 130H938M811 108v64M938 108v64M800 142l22-24M928 142l22-24M1070 172V296M1033 172h70M1042 296h61M1060 162l22 22M1060 286l22 22"/></g>
        <rect x="778" y="28" width="142" height="70" fill="#fff"/>
        <text class="inp" x="782" y="82">700</text>
        <path d="M877 30V92" stroke="#000" stroke-width="3"/>
        <text class="pm1" x="920" y="80">m</text>
        <text class="g54" transform="translate(1024 328) rotate(-90)">250</text>
        <text class="pm" transform="translate(1016 225) rotate(-90)">mm</text>
        <text class="ttlb" x="700" y="664">边坡节点3</text>
      </svg>
      <div class="dlg-actions">
        <button>确定</button>
        <button>取消</button>
      </div>
    </section>

    <!-- hand-drawn red annotation marks -->
    <svg class="marks" viewBox="0 0 1366 768" width="1366" height="768">
      <g fill="none" stroke="#f00">
        <ellipse cx="390" cy="96" rx="112" ry="32" stroke-width="9"/>
        <ellipse cx="442" cy="318" rx="140" ry="75" stroke-width="8"/>
        <ellipse cx="635" cy="459" rx="94" ry="91" stroke-width="7"/>
        <ellipse cx="972" cy="142" rx="82" ry="46" stroke-width="8"/>
      </g>
    </svg>
  </div>
</template>

<style>
html, body { margin: 0; background: #f0f0f0; }
</style>

<style scoped>
* { box-sizing: border-box; }
.app { position: relative; width: 1366px; height: 768px; overflow: hidden; display: flex; flex-direction: column; background: #f0f0f0; color: #111; font: 12px/16px "Noto Sans CJK SC", "Liberation Sans", sans-serif; }
.defs { position: absolute; }
svg { display: block; flex: none; }
.ic16 { width: 16px; height: 16px; }
.ic14 { width: 15px; height: 15px; }

.titlebar { height: 23px; background: #fff; display: flex; align-items: center; padding-left: 3px; }
.logo { width: 15px; height: 15px; }
.title-text { margin-left: 5px; color: #666; font: 12.6px/16px "Open Sans", "Noto Sans CJK SC", sans-serif; white-space: nowrap; flex: 1; }
.winbtns { display: flex; gap: 34px; padding-right: 20px; }
.winbtns svg { width: 11px; height: 11px; }

.menubar { height: 29px; display: flex; align-items: center; padding-left: 7px; white-space: nowrap; position: relative; }
.menu { flex: none; }
.mi { margin-right: 3px; }
.nv { margin-left: 1px; }
.mdrop { margin: 0 7px; }
.mi2 { margin-right: 4px; }
.news { flex: none; height: 27px; line-height: 27px; width: 300px; padding-left: 28px; background: #f6f6f6; color: #0d6a74; margin-left: 7px; border-radius: 3px; font-size: 12px; }
.beans { flex: none; margin-left: 10px; }
.bell { margin-left: 5px; }
.more { font: 12px/12px "Liberation Sans", sans-serif; color: #111; }
.menubar .more { position: absolute; right: 3px; top: 3px; }

.toolrow { height: 31px; display: flex; align-items: center; }
.tb { height: 29px; background: #f6f6f6; display: flex; align-items: center; border-radius: 3px; position: relative; flex: none; }
.tb1 { width: 148px; padding-left: 6px; }
.in1 { position: absolute; left: 139px; top: 56px; }
.tb2 { width: 538px; margin-left: 5px; padding-left: 5px; }
.tb3 { width: 658px; margin-left: 17px; }
.in3 { position: absolute; right: 3px; top: 3px; }
.tool { flex: none; display: flex; align-items: center; gap: 2px; height: 25px; white-space: nowrap; position: relative; }
.tool.dim { color: #a8a8a8; }
.tool.active { background: #d9e8f7; border: 1px solid #1f7bc8; }
.sep { width: 1px; height: 24px; background: #bbb; }
.drop { display: inline-block; width: 0; height: 0; border: 3px solid transparent; border-top: 4px solid #111; border-bottom: 0; margin-left: 7px; flex: none; }

.workspace { height: 623px; display: flex; }
.nav { width: 165px; display: flex; flex-direction: column; margin-right: 5px; flex: none; }
.nav-head { height: 15px; margin-top: 1px; display: flex; align-items: center; gap: 6px; border-top: 1px solid #999; border-left: 1px solid #999; font-size: 12px; line-height: 14px; }
.nav-head span { flex: 1; }
.nav-head svg { width: 9px; height: 9px; }
.nav-head svg:last-child { margin-right: 3px; }
.navbtn { height: 22px; margin: 1px 0 0; padding: 0; font: 12px/18px "Noto Sans CJK SC", sans-serif; background: #f0f0f0; color: #111; border: 1px solid #a8a8a8; text-align: center; }
.navbtn.cur { background: #e8e8e8; border-color: #777; border-width: 1px 2px 2px 1px; }
.navbtn.low { height: 21px; margin-top: 1px; border-color: #cfcfcf #a8a8a8 #a8a8a8 #cfcfcf; }
.treebox { height: 515px; margin: 0 0 0 2px; background: #fff; border: 1px solid #a0a0a0; position: relative; }
.plusminus { height: 28px; padding: 6px 0 0 4px; display: flex; gap: 5px; }
.plusminus svg { width: 18px; height: 16px; }
.tree { display: flex; flex-direction: column; }
.row { height: 16px; position: relative; display: flex; align-items: center; white-space: nowrap; font-size: 12px; line-height: 16px; }
.chev { width: 9px; height: 9px; position: absolute; left: 8px; top: 4px; }
.hd0 { position: absolute; left: 18px; top: 8px; width: 7px; border-top: 1px dotted #888; }
.fold { position: absolute; left: 24px; top: 1px; width: 16px; height: 14px; }
.lbl0 { position: absolute; left: 45px; top: 0; }
.cadic { position: absolute; left: 93px; top: 1px; width: 16px; height: 14px; }
.newtag { position: absolute; left: 109px; top: -4px; background: #f7d117; color: #111; font: 700 8px/9px "Liberation Sans", sans-serif; padding: 0 1px; }
.child::before { content: ""; position: absolute; left: 13px; top: 0; bottom: 0; border-left: 1px dotted #888; }
.child::after { content: ""; position: absolute; left: 32px; top: 0; height: 16px; border-left: 1px dotted #888; }
.child.last::after { height: 8px; }
.hd { position: absolute; left: 33px; top: 8px; width: 10px; border-top: 1px dotted #888; }
.lbl { position: absolute; left: 42px; top: 0; display: flex; align-items: center; gap: 6px; padding-right: 5px; height: 16px; }
.lbl.sel { background: #d8d8d8; }
.lbl em { font: 10px/16px "Liberation Mono", monospace; }

.editor { width: 1196px; display: flex; flex-direction: column; flex: none; }
.erow { display: flex; align-items: center; flex: none; position: relative; }
.gripper { width: 2px; height: 17px; flex: none; background: repeating-linear-gradient(#aaa 0 2px, transparent 2px 4px); margin-left: 3px; }
.e2 { height: 27px; }
.tb2a { width: 790px; height: 26px; display: flex; align-items: center; background: #f6f6f6; border-radius: 3px; }
.tb2a .gripper { margin-right: 8px; }
.e3 { height: 27px; }
.selects { width: 300px; height: 26px; display: flex; align-items: center; background: #f6f6f6; }
.sel1, .sel2 { height: 22px; line-height: 22px; background: #fff; display: flex; align-items: center; padding-left: 3px; }
.sel1 { width: 56px; margin-left: 3px; justify-content: space-between; padding-right: 4px; }
.sel2 { width: 76px; margin-left: 4px; justify-content: space-between; padding-right: 4px; }
.tb3a { margin-left: 341px; width: 422px; height: 26px; display: flex; align-items: center; background: #f6f6f6; border-radius: 3px; }
.tb3a .gripper { margin-right: 7px; }
.e4 { height: 30px; background: #f6f6f6; width: 1160px; }
.e4 > .gripper:first-child { margin-right: 7px; }
.in4 { position: absolute; left: 1150px; top: 3px; }
.g4 { position: absolute; left: 1167px; top: 6px; }
.cad { flex: none; }
.cadt text { fill: #ccc; font: 15px "Liberation Sans", sans-serif; text-anchor: middle; }
.cadt .dimt { fill: #bbb; font-size: 14px; }
.cadt .ong { fill: #8a8a8a; }
.axis text { font-size: 13px; }
.axis .ax2 { fill: #8c8c8c; font-weight: 700; font-size: 14px; }
.bottombar { height: 31px; background: #f6f6f6; width: 888px; }
.bottombar > .gripper:first-child { margin-right: 7px; }
.g5 { margin: 0 3px 0 0; }
.selnp { width: 56px; height: 26px; background: #fff; display: flex; align-items: center; justify-content: space-between; padding: 0 4px 0 3px; }
.sepv { width: 1px; height: 21px; background: #aaa; margin: 0 2px 0 6px; }
.lab { color: #555; margin: 0 2px; font: 12px "Liberation Sans", sans-serif; }
.lab.y { margin-left: 5px; }
.spin { height: 21px; border: 1px solid #888; background: #f4f4f4; text-align: right; padding-right: 17px; color: #666; position: relative; font: 12px/19px "Liberation Sans", sans-serif; }
.sp { position: absolute; right: 4px; top: 3px; width: 0; height: 0; border: 3px solid transparent; border-bottom: 4px solid #666; border-top: 0; }
.sp::after { content: ""; position: absolute; left: -3px; top: 9px; border: 3px solid transparent; border-top: 4px solid #666; border-bottom: 0; }
.s56 { width: 57px; }
.s68 { width: 68px; }
.chk { width: 12px; height: 12px; border: 1px solid #999; background: #fff; margin: 0 9px 0 1px; }
.rot { margin-right: 3px; }
.deg { margin-left: 4px; color: #555; }

.status { height: 22px; display: flex; gap: 3px; padding-top: 1px; }
.cell { background: #fafafa; border: 1px solid #ddd; height: 21px; line-height: 19px; padding-left: 2px; white-space: nowrap; flex: none; font-size: 12px; }
.m, .cell.m { font-family: "Liberation Mono", monospace; font-size: 10px; }
.c1 { width: 147px; }
.c2 { width: 77px; }
.c3 { width: 97px; }
.c4 { width: 48px; }
.c5 { width: 913px; }
.c6 { width: 69px; }

.taskbar { height: 40px; background: #07151b; display: flex; align-items: center; color: #fff; position: relative; }
.start { width: 48px; height: 40px; background: #000; display: flex; align-items: center; justify-content: center; }
.search { width: 344px; height: 40px; background: #333; display: flex; align-items: center; padding-left: 9px; gap: 7px; color: #9a9a9a; font-size: 13px; }
.search span { flex: 1; }
.mic { margin-right: 15px; }
.tasks { display: flex; align-items: center; padding-left: 15px; height: 40px; }
.tasks > svg { margin-right: 26px; }
.tasks > svg:nth-child(1) { margin-right: 27px; }
.tasks > .folder { margin-right: 17px; }
.task-sep { width: 2px; height: 22px; background: #333; flex: none; margin-right: 23px; }
.tk { height: 40px; display: flex; align-items: center; justify-content: center; border-bottom: 3px solid #6cb0e6; flex: none; }
.w40 { width: 40px; margin-right: 9px; }
.w39 { width: 39px; margin-right: 6px; }
.task-active { width: 48px; background: #30414a; }
.tray { position: absolute; left: 1012px; top: 0; height: 40px; width: 354px; display: flex; align-items: center; gap: 9px; }
.t2 { margin-right: 1px; }
.link { color: #aaa; font-size: 12px; }
.zh { font-size: 14px; margin-left: 3px; }
.sg { width: 15px; height: 17px; background: #ee4d1f; color: #fff; border-radius: 4px; font: 700 13px/17px "Liberation Sans", sans-serif; text-align: center; margin-left: 6px; }
.clock { display: flex; flex-direction: column; align-items: center; margin-left: 9px; font-size: 12px; line-height: 20px; width: 66px; }
.note { margin-left: 20px; }

.sogou { position: absolute; left: 493px; top: 33px; height: 25px; display: flex; align-items: center; }
.sg-logo { width: 23px; height: 24px; background: #ee5a1c; color: #fff; font: 700 22px/24px "Liberation Sans", sans-serif; text-align: center; border-radius: 5px; transform: rotate(-8deg); position: relative; z-index: 1; }
.sg-bar { width: 183px; height: 21px; background: #fff; border: 1px solid #dde6ee; display: flex; align-items: center; padding-left: 9px; gap: 8px; color: #1a78c9; margin-left: -1px; }
.sg-bar svg { width: 15px; height: 15px; }
.sg-zh { font-weight: 700; font-size: 14px; }
.sg-dot { font-weight: 700; font-size: 13px; width: 13px; }

.netball { position: absolute; left: 1118px; top: 27px; width: 125px; height: 38px; border: 2px solid #bbb; border-radius: 19px; background: #eee; }
.ball { position: absolute; left: -3px; top: -8px; width: 46px; height: 46px; border-radius: 50%; background: radial-gradient(circle at 50% 75%, #62d565 0, #3bb65a 45%, #1f6f4a 100%); border: 2px solid #ddd; color: #fff; text-align: center; font: 14px/42px "Open Sans", sans-serif; }
.speeds { position: absolute; left: 48px; top: 4px; width: 46px; display: flex; flex-direction: column; font: 10px/16px "Liberation Sans", sans-serif; }
.speeds span { display: flex; justify-content: space-between; }
.up, .dn { width: 0; height: 0; border: 3px solid transparent; margin-top: 4px; }
.up { border-bottom: 7px solid #e85a3a; border-top: 0; }
.dn { border-top: 7px solid #2f9a3a; border-bottom: 0; }
.plus { position: absolute; right: 5px; top: 8px; width: 19px; height: 19px; border-radius: 50%; background: #2e7fd6; color: #fff; font: 700 15px/18px "Liberation Sans", sans-serif; text-align: center; }
.plus b { position: absolute; right: -2px; top: -3px; width: 8px; height: 8px; border-radius: 50%; background: #e0392b; }

.dialog { position: absolute; left: 322px; top: 83px; width: 456px; height: 584px; background: #f0f0f0; border: 1px solid #3f8ddc; box-shadow: 0 0 8px rgba(0,0,0,.35); display: flex; flex-direction: column; }
.dlg-title { height: 27px; background: #fff; display: flex; align-items: center; justify-content: space-between; padding: 0 10px 0 3px; font-size: 12px; flex: none; }
.thumbs { display: grid; grid-template-columns: 221px 221px; grid-template-rows: 139px 139px; gap: 5px; margin: 1px 0 0 3px; flex: none; }
.thumb { background: #000; box-shadow: 0 0 0 1px #aaa; }
.preview { background: #000; margin: 4px 0 0 0; outline: 1px solid #aaa; flex: none; }
.wl { stroke: #fff; stroke-width: 3; fill: none; }
.g36 { fill: #0f0; font: 36px "Liberation Sans", sans-serif; }
.w40 { fill: #fff; font: 36px "Noto Sans CJK SC", sans-serif; }
.w24 { fill: #fff; font: 26px "Liberation Mono", monospace; }
.w30 { fill: #fff; font: 27px "Liberation Serif", serif; }
.mm { fill: #e8c080; font: 22px "Liberation Mono", monospace; }
.ttl { fill: #fff; font: 48px "Liberation Serif", "Noto Sans CJK SC", serif; text-anchor: middle; }
.ttlb { fill: #fff; font: 86px "Liberation Serif", "Noto Sans CJK SC", serif; text-anchor: middle; }
.inp { fill: #000; font: 60px "Liberation Serif", serif; }
.pm { fill: #fff; font: 44px "Liberation Serif", serif; }
.pm1 { fill: #fff; font: 50px "Liberation Serif", serif; }
.g54 { fill: #0f0; font: 54px "Liberation Sans", sans-serif; }
.dlg-actions { display: flex; justify-content: flex-end; gap: 13px; padding: 11px 14px 0 0; flex: none; }
.dlg-actions button { width: 72px; height: 23px; padding: 0; background: #e1e1e1; border: 1px solid #adadad; font: 12px/20px "Noto Sans CJK SC", sans-serif; color: #111; }

.marks { position: absolute; left: 0; top: 0; pointer-events: none; }
</style>
